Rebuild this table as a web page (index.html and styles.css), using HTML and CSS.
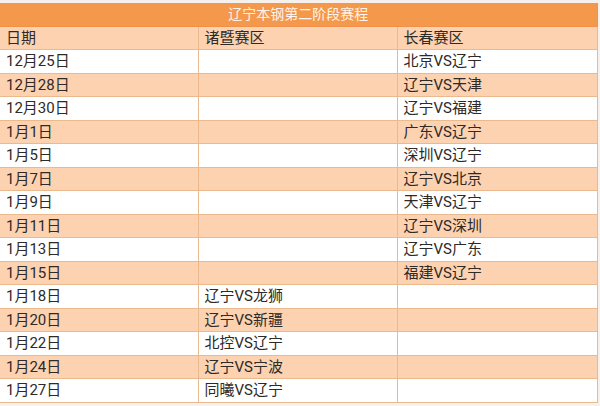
FILE: index.html
```html
<!DOCTYPE html>
<html lang="zh">
<head>
<meta charset="utf-8">
<link rel="stylesheet" href="styles.css">
</head>
<body>
<div class="page">
  <table class="schedule">
    <colgroup><col class="c1"><col class="c2"><col class="c3"></colgroup>
    <tr class="title"><td colspan="3">辽宁本钢第二阶段赛程</td></tr>
    <tr class="alt"><td>日期</td><td>诸暨赛区</td><td>长春赛区</td></tr>
    <tr><td>12月25日</td><td></td><td>北京VS辽宁</td></tr>
    <tr class="alt"><td>12月28日</td><td></td><td>辽宁VS天津</td></tr>
    <tr><td>12月30日</td><td></td><td>辽宁VS福建</td></tr>
    <tr class="alt"><td>1月1日</td><td></td><td>广东VS辽宁</td></tr>
    <tr><td>1月5日</td><td></td><td>深圳VS辽宁</td></tr>
    <tr class="alt"><td>1月7日</td><td></td><td>辽宁VS北京</td></tr>
    <tr><td>1月9日</td><td></td><td>天津VS辽宁</td></tr>
    <tr class="alt"><td>1月11日</td><td></td><td>辽宁VS深圳</td></tr>
    <tr><td>1月13日</td><td></td><td>辽宁VS广东</td></tr>
    <tr class="alt"><td>1月15日</td><td></td><td>福建VS辽宁</td></tr>
    <tr><td>1月18日</td><td>辽宁VS龙狮</td><td></td></tr>
    <tr class="alt"><td>1月20日</td><td>辽宁VS新疆</td><td></td></tr>
    <tr><td>1月22日</td><td>北控VS辽宁</td><td></td></tr>
    <tr class="alt"><td>1月24日</td><td>辽宁VS宁波</td><td></td></tr>
    <tr><td>1月27日</td><td>同曦VS辽宁</td><td></td></tr>
  </table>
</div>
</body>
</html>
```
FILE: styles.css
```css
html, body {
  margin: 0;
  padding: 0;
  background: #f6f1ec;
}
.page {
  width: 600px;
  height: 406px;
  padding-top: 3px;
  box-sizing: border-box;
  background: #f6f1ec;
}
.schedule {
  width: 597px;
  border-collapse: collapse;
  table-layout: fixed;
  font-family: Roboto, "Noto Sans CJK SC", sans-serif;
  font-size: 15px;
  color: #2e2a27;
}
.c1 { width: 198px; }
.c2 { width: 199px; }
.c3 { width: 200px; }
.schedule td {
  height: 22.5px;
  padding: 0 0 0 6px;
  border: 1px solid #ebb98e;
  background: #ffffff;
  line-height: 20px;
  white-space: nowrap;
  overflow: hidden;
}
.schedule tr.alt td {
  background: #fcd2b1;
}
.schedule tr.title td {
  background: #f4994b;
  color: #fff4ea;
  font-size: 14px;
  text-align: center;
  padding: 0;
  border-color: #f0904a;
  border-top: 0;
}
.schedule td:first-child {
  border-left: 0;
}
```
